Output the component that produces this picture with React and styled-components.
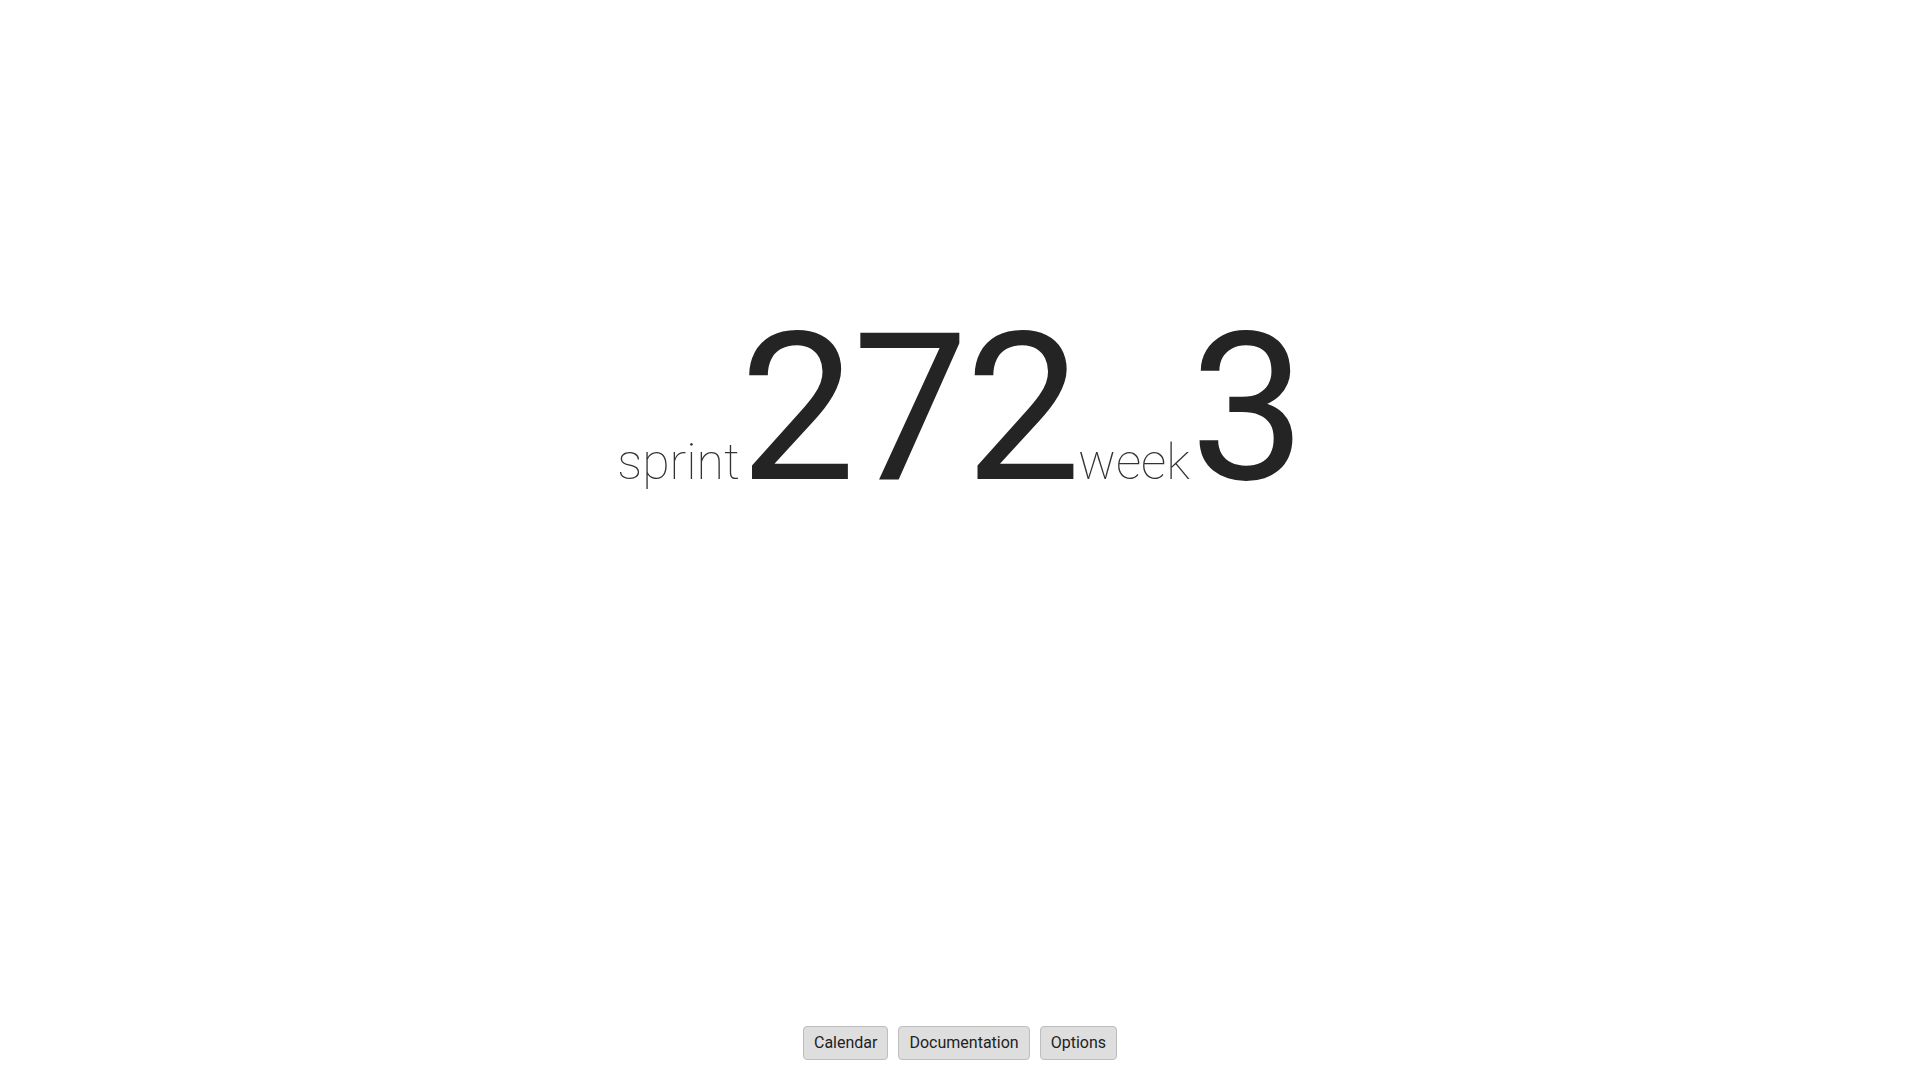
import React from 'react'
import styled, { createGlobalStyle } from 'styled-components'

const GlobalStyle = createGlobalStyle`
	html, body {
		margin: 0;
		padding: 0;
		background: #fff;
	}
	body {
		font-family: Roboto, "Liberation Sans", sans-serif;
		color: #222;
	}
`

const App = () => {
  return (
	<>
		<GlobalStyle />
		<Page>
			<Display>
				<Label>sprint</Label>
				<Number>272</Number>
				<Label>week</Label>
				<Number>3</Number>
			</Display>
			<Footer>
				<Button>Calendar</Button>
				<Button>Documentation</Button>
				<Button>Options</Button>
			</Footer>
		</Page>
	</>
  )
}

export default App;


const Page = styled.div`
	min-height: 100vh;
	display: flex;
	flex-direction: column;
	align-items: center;
	box-sizing: border-box;
`

const Display = styled.div`
	margin-top: 306px;
	line-height: 1;
	white-space: nowrap;
	color: #242424;
`

const Label = styled.span`
	font-size: 50px;
	font-weight: 100;
	color: #333;
`

const Number = styled.span`
	font-size: 206px;
	font-weight: 400;
	letter-spacing: -3px;
`

const Footer = styled.div`
	margin-top: auto;
	padding-bottom: 20px;
	display: flex;
	gap: 10px;
`

const Button = styled.button`
	font-family: Roboto, "Liberation Sans", sans-serif;
	font-size: 16px;
	line-height: 18px;
	padding: 7px 10px;
	color: #222;
	background-color: #dedede;
	border: 1px solid #bdbdbd;
	border-radius: 4px;
	cursor: pointer;
`
